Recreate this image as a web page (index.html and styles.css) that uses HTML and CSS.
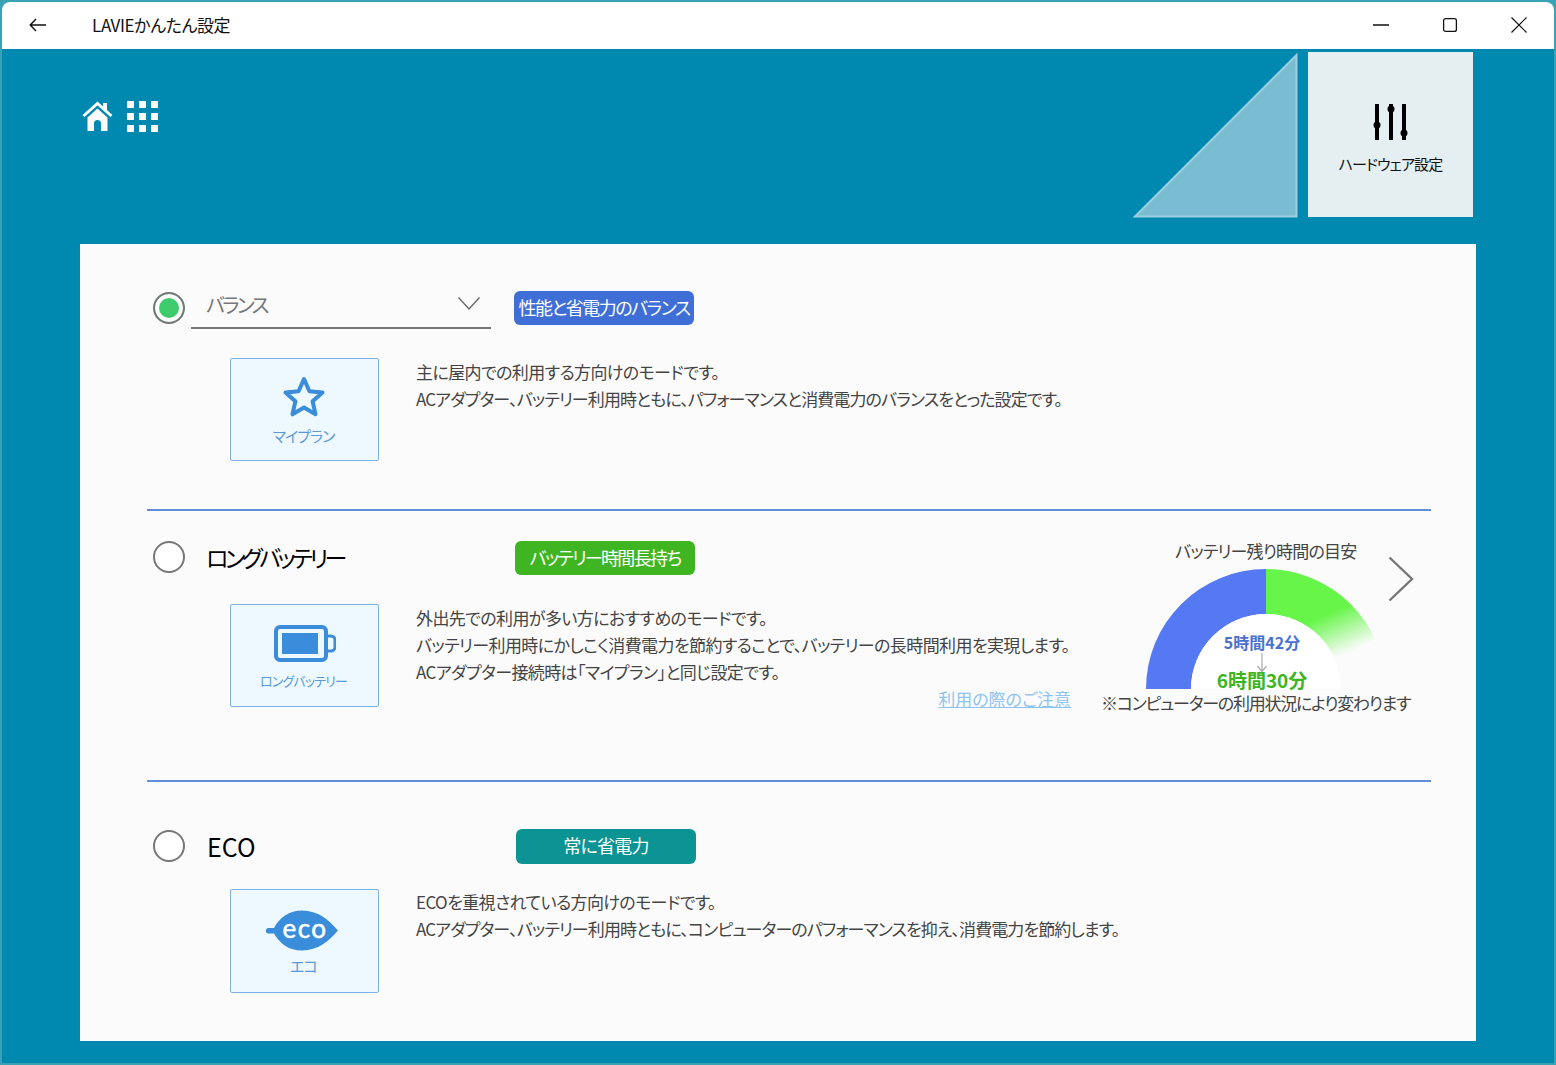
FILE: index.html
```html
<!DOCTYPE html>
<html lang="ja">
<head>
    <meta charset="UTF-8">
    <title>LAVIEかんたん設定</title>
    <link rel="stylesheet" href="styles.css">
</head>
<body>
    <div class="window">
        <div class="titlebar">
            <svg class="back-icon" width="18" height="14" viewBox="0 0 18 14"><path d="M7 1 1.2 7 7 13M1.2 7H17" fill="none" stroke="#111" stroke-width="1.4"/></svg>
            <span class="app-title">LAVIEかんたん設定</span>
            <div class="win-controls">
                <span class="win-btn"><svg width="16" height="16" viewBox="0 0 16 16"><path d="M0 8H16" stroke="#111" stroke-width="1.3"/></svg></span>
                <span class="win-btn"><svg width="16" height="16" viewBox="0 0 16 16"><rect x="1.6" y="1.6" width="12.8" height="12.8" rx="2" fill="none" stroke="#111" stroke-width="1.3"/></svg></span>
                <span class="win-btn"><svg width="16" height="16" viewBox="0 0 16 16"><path d="M.5.5 15.5 15.5M15.5.5.5 15.5" stroke="#111" stroke-width="1.2"/></svg></span>
            </div>
        </div>

        <div class="header">
            <div class="nav-icons">
                <svg width="31" height="31" viewBox="0 0 31 31">
                    <path d="M1.5 16 15.5 3.5 29.5 16" fill="none" stroke="#fff" stroke-width="3"/>
                    <path d="M21 3h4v8l-4-3.5z" fill="#fff"/>
                    <path d="M5.5 17.5 15.5 8.5l10 9V31H19V23.500a3.500 3.500 0 0 0-7 0V31H5.500z" fill="#fff"/>
                </svg>
                <div class="apps-grid">
                    <span></span><span></span><span></span>
                    <span></span><span></span><span></span>
                    <span></span><span></span><span></span>
                </div>
            </div>
            <svg class="corner" width="166" height="165" viewBox="0 0 166 165"><path d="M164.500 2V163.500H3z" fill="#7abdd3" stroke="#9ccfe0" stroke-width="2"/></svg>
            <div class="hw-tile">
                <svg width="36" height="36" viewBox="0 0 36 36">
                    <path d="M4 1V35M18 1V35M31 1V35" stroke="#000" stroke-width="4" stroke-linecap="round"/>
                    <circle cx="4" cy="21" r="3.500"/><circle cx="18" cy="5" r="3.500"/><circle cx="31" cy="29" r="3.500"/>
                </svg>
                <span class="hw-label">ハードウェア設定</span>
            </div>
        </div>

        <div class="panel">
            <section class="plan plan-balance">
                <div class="plan-head">
                    <span class="radio radio-on"></span>
                    <div class="plan-select">
                        <span>バランス</span>
                        <svg width="22" height="13" viewBox="0 0 22 13"><path d="M.5.500 11 12 21.500.500" fill="none" stroke="#666" stroke-width="1.300"/></svg>
                    </div>
                    <span class="badge badge-blue">性能と省電力のバランス</span>
                </div>
                <div class="plan-body">
                    <div class="tile">
                        <svg class="tile-star" width="44" height="42" viewBox="0 0 44 42"><path d="M22 3 27.400 15.200 40.500 16.500 30.600 25.300 33.500 38.300 22 31.500 10.500 38.300 13.400 25.300 3.500 16.500 16.600 15.200z" fill="none" stroke="#3a8ddb" stroke-width="4" stroke-linejoin="round"/></svg>
                        <span class="tile-label">マイプラン</span>
                    </div>
                    <p class="desc">主に屋内での利用する方向けのモードです。<br><span class="tight">ACアダプター、バッテリー利用時ともに、パフォーマンスと消費電力のバランスをとった設定です。</span></p>
                </div>
            </section>

            <section class="plan plan-long">
                <div class="plan-main">
                    <div class="plan-head">
                        <span class="radio"></span>
                        <div class="plan-name">ロングバッテリー</div>
                        <span class="badge badge-green">バッテリー時間長持ち</span>
                    </div>
                    <div class="plan-body">
                        <div class="tile">
                            <svg class="tile-battery" width="62" height="37" viewBox="0 0 62 37">
                                <rect x="2" y="2" width="50" height="33" rx="4" fill="none" stroke="#3a8ddb" stroke-width="4"/>
                                <path d="M54 11h3a4 4 0 0 1 4 4v7a4 4 0 0 1-4 4h-3" fill="none" stroke="#3a8ddb" stroke-width="3"/>
                                <rect x="8" y="8" width="36" height="21" fill="#3a8ddb"/>
                            </svg>
                            <span class="tile-label tile-label-small">ロングバッテリー</span>
                        </div>
                        <div class="desc-col">
                            <p class="desc">外出先での利用が多い方におすすめのモードです。<br>バッテリー利用時にかしこく消費電力を節約することで、バッテリーの長時間利用を実現します。<br>ACアダプター接続時は「マイプラン」と同じ設定です。</p>
                            <a class="notice-link">利用の際のご注意</a>
                        </div>
                    </div>
                </div>
                <aside class="gauge">
                    <div class="gauge-title">バッテリー残り時間の目安</div>
                    <svg class="gauge-chart" width="250" height="126" viewBox="0 0 250 126">
                        <defs>
                            <linearGradient id="fade" gradientUnits="userSpaceOnUse" x1="170" y1="24" x2="197" y2="86">
                                <stop offset="0" stop-color="#66f548"/>
                                <stop offset="0.35" stop-color="#66f548"/>
                                <stop offset="1" stop-color="#66f548" stop-opacity="0"/>
                            </linearGradient>
                        </defs>
                        <path d="M0 120A120 120 0 0 1 120 0V45A75 75 0 0 0 45 120z" fill="#5479f2"/>
                        <path d="M120 0A120 120 0 0 1 240 120H195A75 75 0 0 0 120 45z" fill="url(#fade)"/>
                        <path d="M45 120A75 75 0 0 1 195 120z" fill="#fff"/>
                        <text class="gauge-before" x="116" y="80" text-anchor="middle">5時間42分</text>
                        <path d="M116 84V102M111.500 97 116 102.500 120.500 97" fill="none" stroke="#aaa" stroke-width="1.200"/>
                        <text class="gauge-after" x="116" y="119" text-anchor="middle">6時間30分</text>
                    </svg>
                    <div class="gauge-note">※コンピューターの利用状況により変わります</div>
                    <svg class="gauge-next" width="26" height="46" viewBox="0 0 26 46"><path d="M1.500 1.500 24 23 1.500 44.500" fill="none" stroke="#777" stroke-width="2.400"/></svg>
                </aside>
            </section>

            <section class="plan plan-eco">
                <div class="plan-head">
                    <span class="radio"></span>
                    <div class="plan-name plan-name-en">ECO</div>
                    <span class="badge badge-teal">常に省電力</span>
                </div>
                <div class="plan-body">
                    <div class="tile tile-tall">
                        <svg class="tile-eco" width="72" height="41" viewBox="0 0 72 41">
                            <path d="M0 21a2.500 2.500 0 0 1 2.500-3H8C14 7 23 .5 36 .5 52 .5 63 10 72 20.500 63 31 52 40.500 36 40.500 23 40.500 14 34 8 23.500H2.500A2.500 2.500 0 0 1 0 21z" fill="#3a8ddb"/>
                            <text class="eco-word" x="39" y="28" text-anchor="middle">eco</text>
                        </svg>
                        <span class="tile-label">エコ</span>
                    </div>
                    <p class="desc">ECOを重視されている方向けのモードです。<br><span class="tight">ACアダプター、バッテリー利用時ともに、コンピューターのパフォーマンスを抑え、消費電力を節約します。</span></p>
                </div>
            </section>
        </div>
    </div>
</body>
</html>
```

FILE: styles.css
```css
* {
    box-sizing: border-box;
}
html, body {
    height: 100%;
}
body {
    margin: 0;
    padding: 2px;
    overflow: hidden;
    background-color: #3aa3b3;
    font-family: "Noto Sans CJK JP", "Noto Sans", sans-serif;
    font-feature-settings: "palt";
    color: #444;
}
.window {
    height: 100%;
    display: flex;
    flex-direction: column;
    background-color: #0089b0;
    border-radius: 8px 8px 0 0;
    overflow: hidden;
}

/* title bar */
.titlebar {
    height: 47px;
    flex: none;
    display: flex;
    align-items: center;
    padding: 0 1px 2px 0;
    background-color: #fff;
    color: #111;
}
.back-icon {
    margin-left: 27px;
}
.app-title {
    margin-left: 45px;
    font-size: 17px;
    letter-spacing: -0.4px;
}
.win-controls {
    margin-left: auto;
    display: flex;
}
.win-btn {
    width: 69px;
    display: flex;
    justify-content: center;
}

/* header */
.header {
    height: 195px;
    flex: none;
    display: flex;
    align-items: flex-start;
    padding: 3px 81px 0 80px;
}
.nav-icons {
    display: flex;
    gap: 14px;
    margin-top: 48px;
}
.apps-grid {
    display: grid;
    grid-template-columns: repeat(3, 7px);
    grid-template-rows: repeat(3, 7px);
    gap: 5px;
    padding-top: 1px;
}
.apps-grid span {
    background-color: #fff;
}
.corner {
    margin-left: auto;
    margin-top: 1px;
}
.hw-tile {
    width: 165px;
    height: 165px;
    margin-left: 10px;
    background-color: #e5eef1;
    color: #111;
    display: flex;
    flex-direction: column;
    align-items: center;
    padding-top: 52px;
}
.hw-label {
    margin-top: 13px;
    font-size: 15px;
    letter-spacing: -0.9px;
}

/* plans */
.panel {
    flex: 1;
    margin: 0 78px 22px;
    padding: 0 45px 0 67px;
    background-color: #fbfbfb;
}
.plan {
    border-bottom: 2px solid #5f8fd8;
}
.plan-balance {
    padding: 47px 0 48px;
}
.plan-long {
    position: relative;
    display: flex;
    padding: 30px 0 72px;
}
.plan-eco {
    padding: 47px 0 0;
    border-bottom: none;
}
.plan-head {
    display: flex;
    align-items: center;
}
.plan-balance .plan-head {
    align-items: flex-start;
}
.radio {
    width: 32px;
    height: 32px;
    margin: -2px 0 0 6px;
    flex: none;
    border: 2px solid #777;
    border-radius: 50%;
    background-color: #fff;
}
.radio-on {
    margin-top: 1px;
    background-color: #3ecb6c;
    box-shadow: inset 0 0 0 4px #fff;
}
.plan-select, .plan-name {
    width: 300px;
    margin-left: 6px;
    padding-left: 15px;
}
.plan-select {
    height: 38px;
    padding-right: 11px;
    display: flex;
    justify-content: space-between;
    border-bottom: 2px solid #777;
    color: #777;
    font-size: 20px;
    letter-spacing: -2.7px;
    line-height: 28px;
}
.plan-select svg {
    margin-top: 6px;
}
.plan-name {
    margin-top: -2px;
    font-size: 23px;
    letter-spacing: -3.5px;
    color: #000;
}
.plan-name-en {
    padding-left: 16px;
    font-size: 25px;
    letter-spacing: 0;
}
.badge {
    width: 180px;
    height: 34px;
    margin-left: 23px;
    border-radius: 6px;
    color: #fff;
    font-size: 18px;
    line-height: 32px;
    text-align: center;
    white-space: nowrap;
}
.badge-blue {
    background-color: #3f6fd6;
    letter-spacing: -1.5px;
}
.badge-green {
    margin-left: 24px;
    background-color: #3fb522;
    letter-spacing: -1.7px;
}
.badge-teal {
    height: 35px;
    margin-left: 25px;
    background-color: #0c9494;
    letter-spacing: -0.8px;
}
.plan-body {
    display: flex;
    align-items: flex-start;
    margin-top: 29px;
}
.plan-eco .plan-body {
    margin-top: 25px;
}
.tile {
    width: 149px;
    height: 103px;
    margin-left: 83px;
    flex: none;
    display: flex;
    flex-direction: column;
    align-items: center;
    padding-top: 19px;
    border: 1px solid #7fb2e4;
    border-radius: 2px;
    background-color: #eef8ff;
}
.tile-tall {
    height: 104px;
}
.tile-star {
    margin: -2px 1px 0 0;
}
.tile-battery {
    margin-top: 1px;
}
.tile-eco {
    margin: 1px 5px -3px 0;
}
.tile-label {
    margin: 6px 2px 0 0;
    font-size: 15px;
    letter-spacing: -1px;
    line-height: 24px;
    color: #5a9ad8;
}
.tile-label-small {
    margin-top: 7px;
    font-size: 13px;
    letter-spacing: -0.85px;
}
.desc {
    margin: 0 0 0 37px;
    font-size: 17px;
    letter-spacing: -0.6px;
    line-height: 27px;
    white-space: nowrap;
}
.plan-eco .desc {
    margin-top: -1px;
}
.tight {
    letter-spacing: -0.9px;
}
.desc-col {
    width: 692px;
}
.notice-link {
    display: block;
    margin: 2px 0 -4px;
    text-align: right;
    font-size: 17px;
    line-height: 24px;
    color: #90c4f0;
    text-decoration: underline;
}

/* battery gauge */
.gauge {
    width: 331px;
    height: 167px;
    margin-left: auto;
    display: flex;
    flex-direction: column;
    align-items: flex-start;
}
.gauge-title {
    margin-left: 75px;
    font-size: 17px;
    letter-spacing: -0.8px;
    line-height: 20px;
}
.gauge-chart {
    margin: 8px 0 0 46px;
    flex: none;
}
.gauge-before {
    font-size: 16px;
    font-weight: 700;
    fill: #4a70cf;
}
.gauge-after {
    font-size: 19px;
    font-weight: 700;
    fill: #3cb521;
}
.gauge-note {
    margin: -4px 0 0 1px;
    font-size: 17px;
    letter-spacing: -1.25px;
    line-height: 24px;
    white-space: nowrap;
}
.gauge-next {
    position: absolute;
    top: 45px;
    right: 17px;
}
.eco-word {
    font-family: "Lato", sans-serif;
    font-size: 26px;
    letter-spacing: 1.5px;
    fill: #fff;
    stroke: #fff;
    stroke-width: 0.5px;
}
```
